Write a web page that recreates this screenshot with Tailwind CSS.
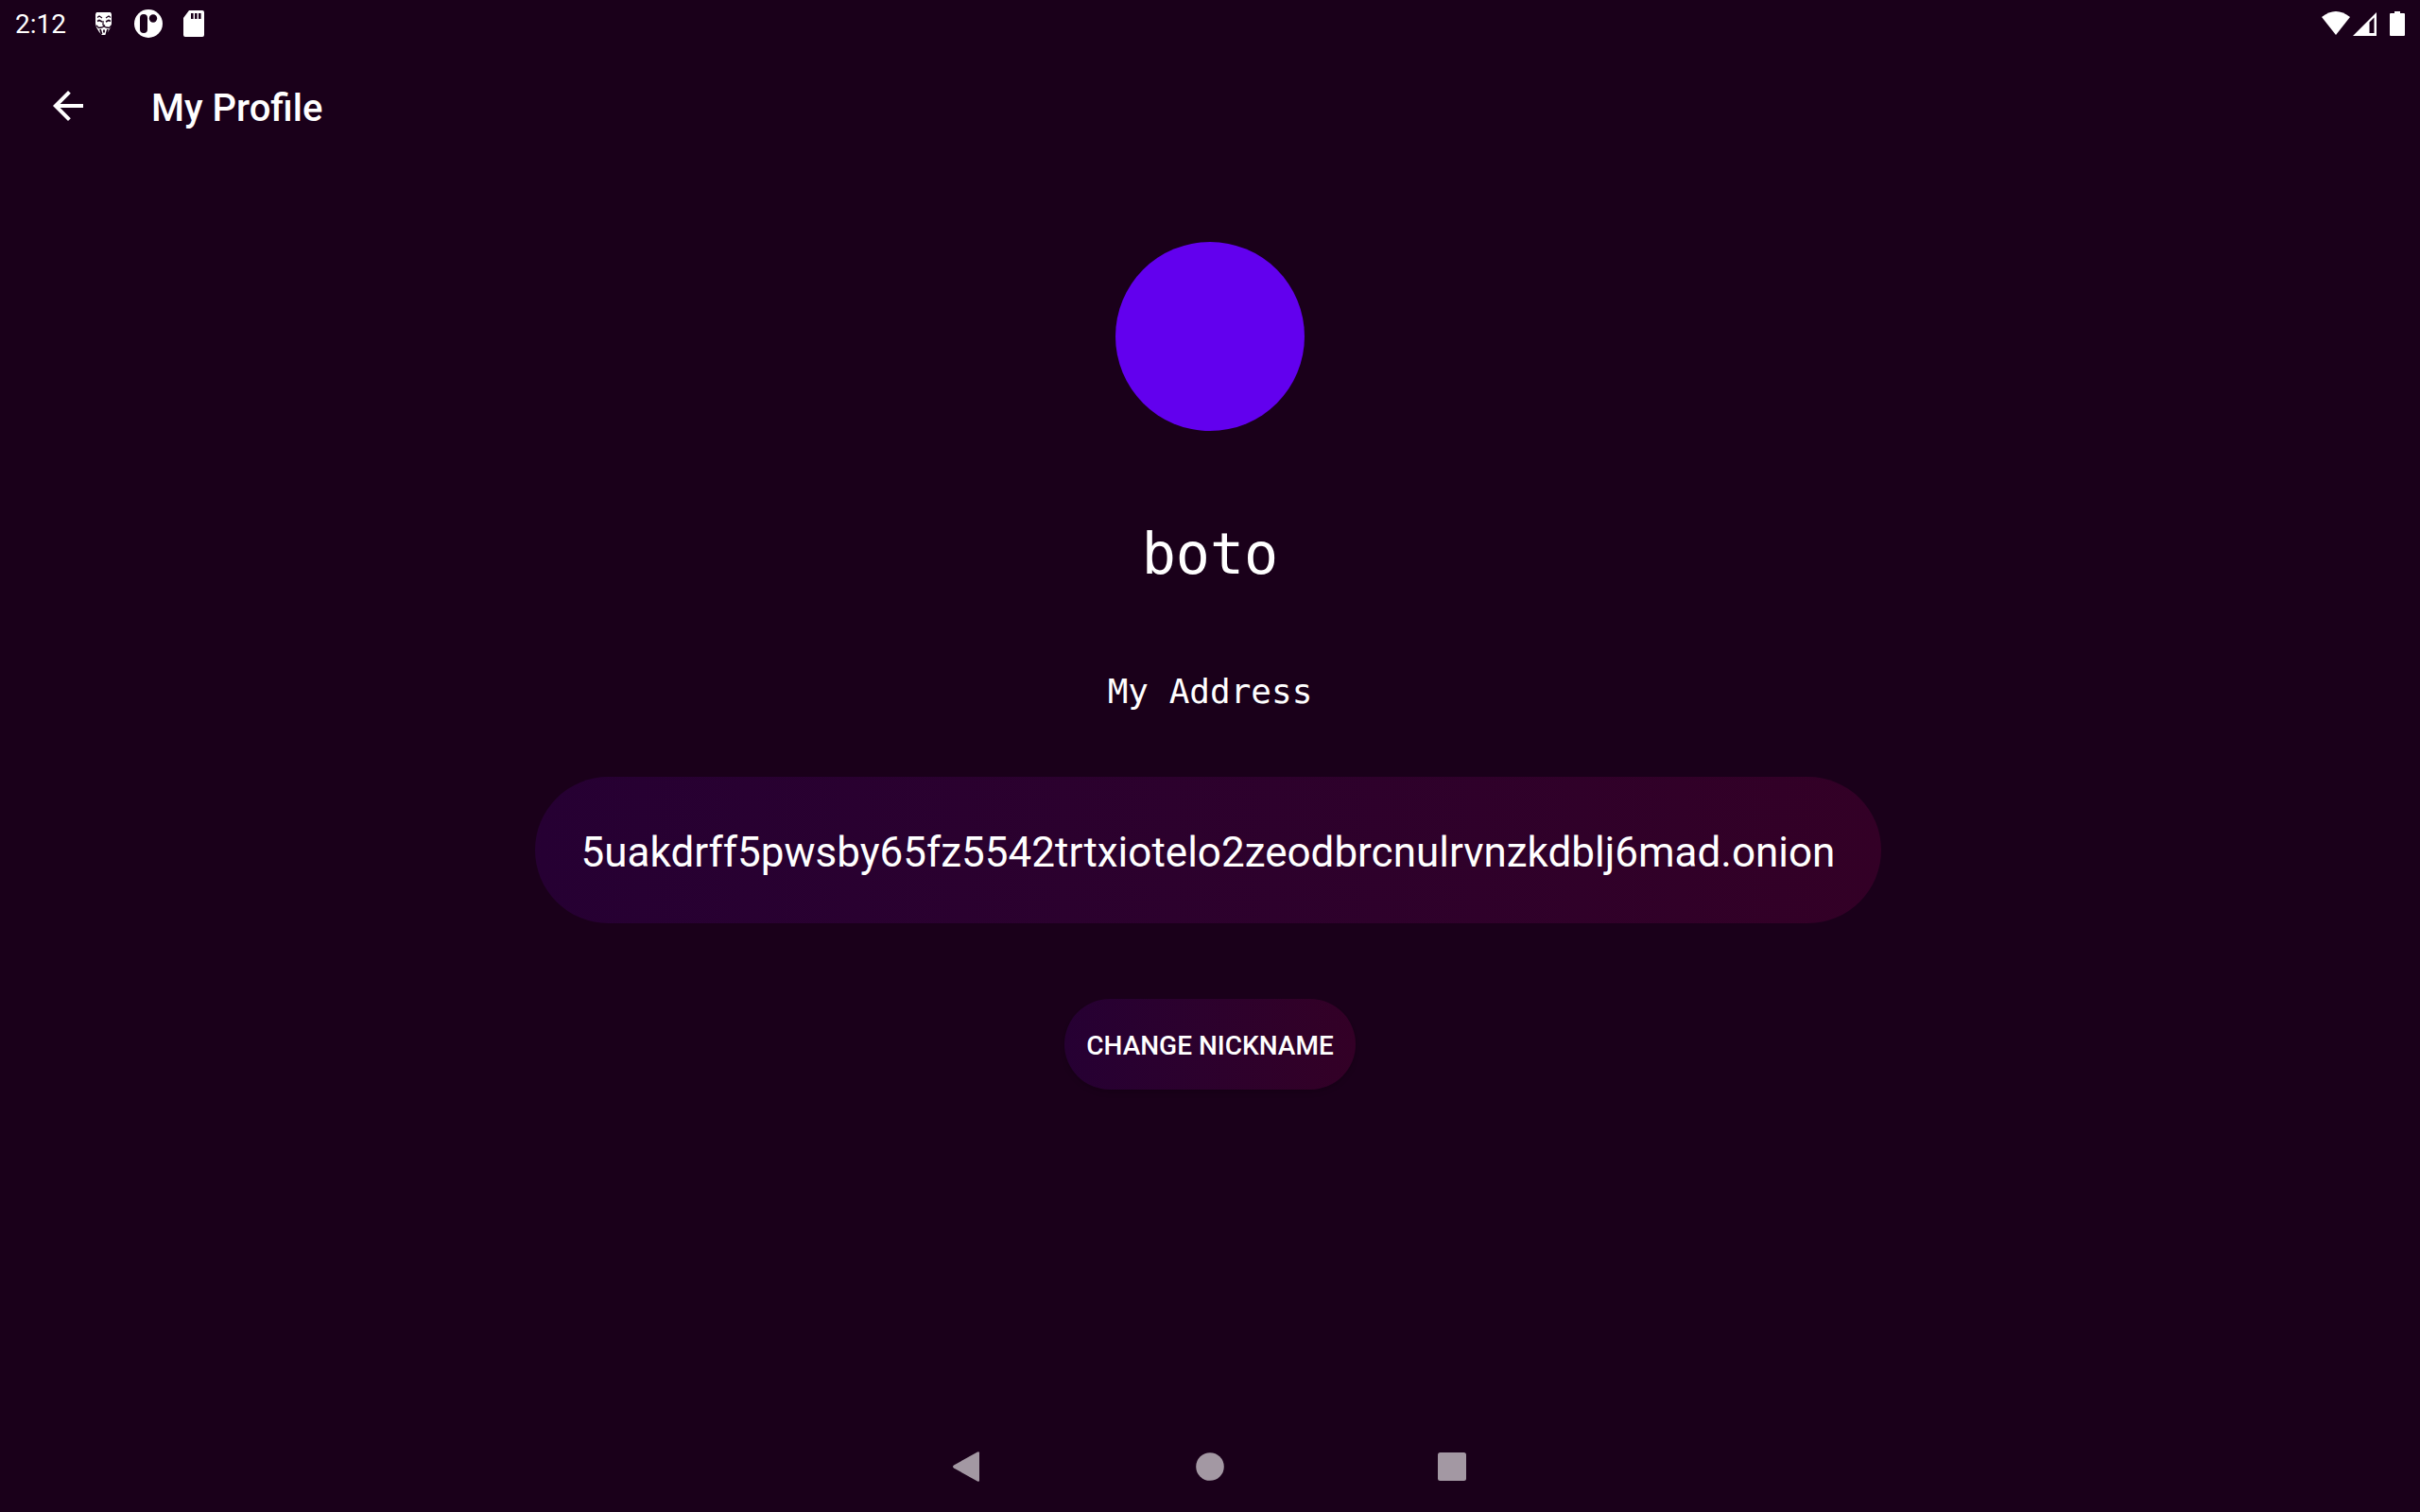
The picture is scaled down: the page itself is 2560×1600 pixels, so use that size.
<!DOCTYPE html>
<html lang="en">
<head>
<meta charset="utf-8">
<meta name="viewport" content="width=device-width, initial-scale=1">
<title>My Profile</title>
<script src="https://cdn.jsdelivr.net/npm/@tailwindcss/browser@4"></script>
</head>
<body class="flex min-h-screen flex-col bg-[#1a001a] font-['Roboto',sans-serif] text-white">
  <!-- Status bar -->
  <div class="flex h-12 items-center justify-between pt-0.5 pl-4 pr-0.5">
    <div class="flex items-center">
      <time class="w-20 pt-0.5 text-[28px] leading-8">2:12</time>
      <svg class="h-8 w-8" viewBox="0 0 32 32" aria-hidden="true">
        <path fill="#fff" d="M6 4h15l1 2v10l-1 4-3 5-3 3h-3l-3-3-3-5-1-4V6z"/>
        <g fill="none" stroke="#1a001a">
          <path stroke-width="1.200" d="M7 9.500l2-1.500 3 2M21 9.500L19 8l-3 2M13 13v4.500l1 1 1-1"/>
          <path stroke-width="1.700" d="M7 13.500l2-1 3 1.500M21 13.500l-2-1-3 1.500"/>
          <path stroke-width="1.300" d="M6 18l2.500 2.500 3-.5 2.500-1 2.500 1 3 .5L22 18"/>
          <path stroke-width="1.800" d="M10 22l1.500 5M18 22l-1.500 5M14 22.500v3"/>
        </g>
      </svg>
      <svg class="ml-3 h-8 w-8" viewBox="0 0 32 32" aria-hidden="true">
        <circle cx="17" cy="16" r="15" fill="#fff"/>
        <rect x="8" y="6" width="8" height="20" rx="4" fill="#1a001a"/>
        <circle cx="22" cy="10.500" r="4.200" fill="#1a001a"/>
      </svg>
      <svg class="ml-[18px] h-8 w-8" viewBox="0 0 32 32" aria-hidden="true">
        <path fill="#fff" fill-rule="evenodd" d="M10 2h14q2 0 2 2v24q0 2-2 2H6q-2 0-2-2V10zM12 5v6h2.600V5zM16 5v6h2.600V5zM20 5v6h2.600V5z"/>
      </svg>
    </div>
    <div class="flex items-center gap-px">
      <svg class="h-8 w-8" viewBox="0 0 32 32" aria-hidden="true"><path fill="#fff" d="M0 9Q15-3 30 9L15 28z"/></svg>
      <svg class="h-8 w-8" viewBox="0 0 32 32" aria-hidden="true"><path fill="#fff" fill-rule="evenodd" d="M25 4v25H0zM17.500 14.500V26H22.500V9.500z"/></svg>
      <svg class="ml-1 h-8 w-8" viewBox="0 0 32 32" aria-hidden="true"><path fill="#fff" d="M7 3h6v2h4q1 0 1 1v22q0 1-1 1H3q-1 0-1-1V6q0-1 1-1h4z"/></svg>
    </div>
  </div>

  <header class="flex h-32 items-center gap-16 px-12">
    <button type="button" aria-label="Back" class="h-12 w-12">
      <svg class="h-12 w-12" viewBox="0 0 24 24" aria-hidden="true"><path fill="#fff" d="M20 11H7.830l5.590-5.590L12 4l-8 8 8 8 1.410-1.410L7.830 13H20z"/></svg>
    </button>
    <h1 class="pt-1.5 text-[40px] leading-12 font-medium">My Profile</h1>
  </header>

  <main class="flex flex-1 flex-col items-center pt-20">
    <div class="h-50 w-50 rounded-full bg-[#6200ee]"></div>
    <h2 class="mt-[90px] font-['DejaVu_Sans_Mono',monospace] text-[60px] leading-20">boto</h2>
    <p class="mt-[82px] font-['DejaVu_Sans_Mono',monospace] text-[36px] leading-12">My Address</p>
    <p class="mt-[66px] mr-1 rounded-full bg-linear-to-r from-[#260033] to-[#330026] px-[49px] pt-[54px] pb-[49px] text-[44px] leading-13">5uakdrff5pwsby65fz5542trtxiotelo2zeodbrcnulrvnzkdblj6mad.onion</p>
    <button type="button" class="mt-20 h-24 rounded-full bg-linear-to-r from-[#260033] to-[#330026] px-[23px] pt-1 text-[28px] font-medium uppercase shadow-md">Change Nickname</button>
  </main>

  <!-- System navigation -->
  <nav aria-label="System" class="flex h-24 items-center justify-center gap-52 text-[#a398a3]">
    <button type="button" aria-label="Back" class="h-12 w-12"><svg class="h-12 w-12" viewBox="0 0 48 48" aria-hidden="true"><path fill="currentColor" d="M34 8.500q2-1 2 1v29q0 2-2 1L9 25.500q-2-1.500 0-3z"/></svg></button>
    <button type="button" aria-label="Home" class="h-12 w-12"><svg class="h-12 w-12" viewBox="0 0 48 48" aria-hidden="true"><circle cx="24" cy="24" r="14.800" fill="currentColor"/></svg></button>
    <button type="button" aria-label="Recent apps" class="h-12 w-12"><svg class="h-12 w-12" viewBox="0 0 48 48" aria-hidden="true"><rect x="9" y="9" width="30" height="30" rx="2.500" fill="currentColor"/></svg></button>
  </nav>
</body>
</html>
